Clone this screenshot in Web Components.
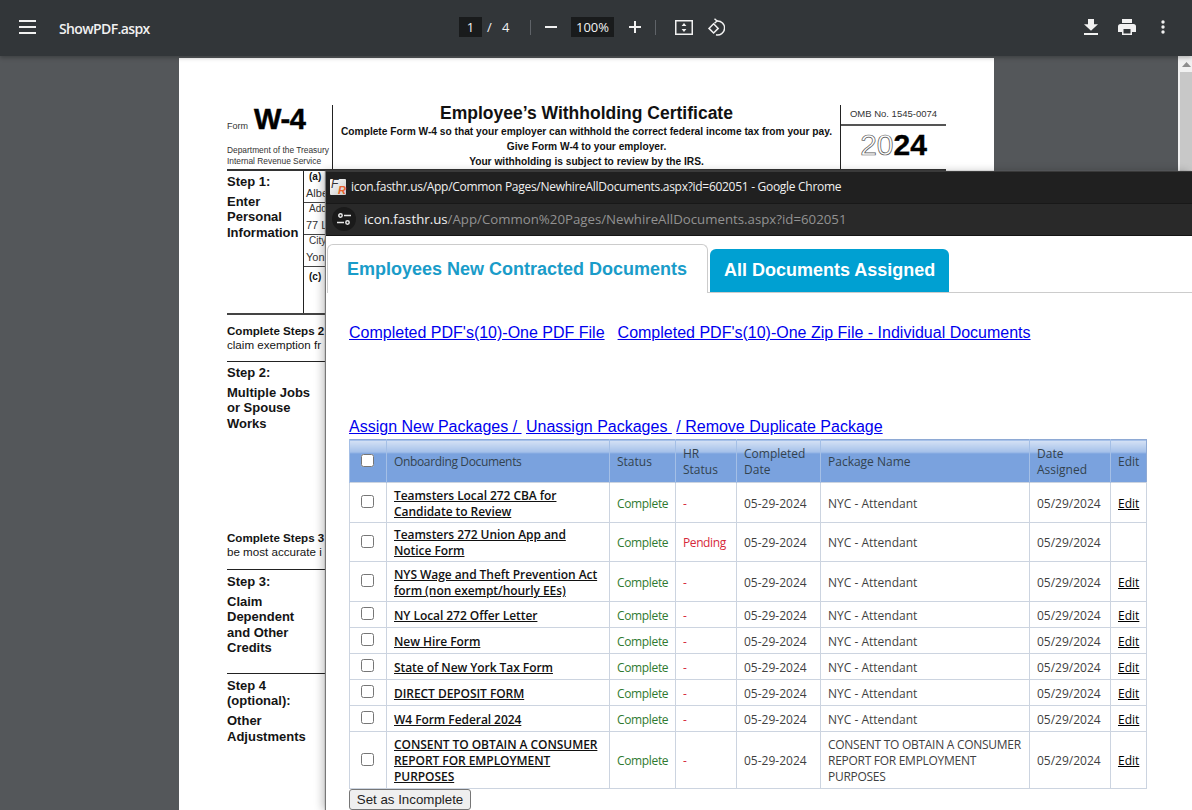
<!DOCTYPE html>
<html>
<head>
<meta charset="utf-8">
<title>ShowPDF.aspx</title>
<style>
  html, body { margin: 0; height: 100%; overflow: hidden; background: #54575a; }
  body { position: relative; width: 1192px; height: 810px; font-family: "Liberation Sans", Arial, sans-serif; }
</style>
</head>
<body>
<pdf-toolbar></pdf-toolbar>
<pdf-viewer>
  <w4-page></w4-page>
</pdf-viewer>
<chrome-popup>
  <doc-tabs></doc-tabs>
  <doc-links></doc-links>
  <doc-table></doc-table>
</chrome-popup>

<script>
// top bar of the pdf viewer
class PdfToolbar extends HTMLElement {
  constructor() {
    super();
    this.attachShadow({mode: "open"}).innerHTML = `
    <style>
      :host { display: flex; align-items: center; box-sizing: border-box; height: 56px; padding-bottom: 2px; background: #323639; color: #f1f1f1;
        font-family: "Open Sans", "Noto Sans", sans-serif; box-shadow: 0 2px 4px rgba(0,0,0,.25); position: relative; z-index: 1; }
      .left { width: 459px; display: flex; align-items: center; flex: none; }
      svg { display: block; flex: none; }
      .name { font-size: 14px; font-weight: 600; margin: 2px 0 0 23px; letter-spacing: -.62px; }
      .mid { display: flex; align-items: center; font-size: 13px; flex: none; }
      .box { background: #191b1c; height: 20px; line-height: 20px; text-align: center; }
      .sep { width: 1px; height: 15px; background: #5f6368; }
      .right { margin-left: auto; display: flex; align-items: center; }
    </style>
    <div class="left">
      <svg style="margin-left:19px" width="17" height="14" viewBox="0 0 17 14" fill="#f1f1f1"><rect y="0" width="17" height="2"/><rect y="6" width="17" height="2"/><rect y="12" width="17" height="2"/></svg>
      <span class="name">ShowPDF.aspx</span>
    </div>
    <div class="mid">
      <span class="box" style="width:23px">1</span>
      <span style="margin-left:5px;width:15px">/</span>
      <span style="width:28px">4</span>
      <span class="sep"></span>
      <svg style="margin-left:14px" width="12" height="2" fill="#f1f1f1"><rect width="12" height="2"/></svg>
      <span class="box" style="width:43px;margin-left:14px">100%</span>
      <svg style="margin-left:15px" width="12" height="12" fill="#f1f1f1"><rect y="5" width="12" height="2"/><rect x="5" width="2" height="12"/></svg>
      <span class="sep" style="margin-left:14px"></span>
      <svg style="margin-left:19px" width="18" height="15" viewBox="0 0 18 15" fill="#f1f1f1"><path d="M0 0h18v15H0zM1.500 1.500v12h15v-12z"/><path d="M9 3l2.400 3H6.600zM9 12l-2.400-3h4.800z"/></svg>
      <svg style="margin-left:14px" width="18" height="18" viewBox="0 0 18 18" fill="none" stroke="#f1f1f1" stroke-width="1.500"><path d="M7.500 .8L10 3 7.500 5.200"/><path d="M10 3a7 7 0 1 1-1 13.800"/><path d="M6.600 5.800l4.600 4.600-4.600 4.600L2 10.400z"/></svg>
    </div>
    <div class="right">
      <svg width="14" height="16" viewBox="0 0 14 16" fill="#f1f1f1"><path d="M4 0h6v6h4l-7 7-7-7h4z" transform="translate(0,-.5) scale(1,.95)"/><rect y="14" width="14" height="2"/></svg>
      <svg style="margin-left:20px" width="18" height="16" viewBox="0 0 18 16" fill="#f1f1f1"><path d="M4 0h10v4H4zM2.500 5h13A2.500 2.500 0 0 1 18 7.500V13h-4v3H4v-3H0V7.500A2.500 2.500 0 0 1 2.500 5zM5.500 10v4.500h7V10z"/></svg>
      <svg style="margin:0 27px 0 25px" width="4" height="14" viewBox="0 0 4 14" fill="#f1f1f1"><circle cx="2" cy="2" r="1.700"/><circle cx="2" cy="7" r="1.700"/><circle cx="2" cy="12" r="1.700"/></svg>
    </div>`;
  }
}

// gray area holding the page and the scrollbar
class PdfViewer extends HTMLElement {
  constructor() {
    super();
    this.attachShadow({mode: "open"}).innerHTML = `
    <style>
      :host { display: flex; height: 754px; background: #54575a; overflow: hidden; }
      .pages { width: 994px; padding: 2px 0 0 179px; box-sizing: border-box; flex: none; }
      .bar { margin-left: auto; width: 14px; background: #f1f1f1; padding-left: 2px; box-sizing: border-box; display: flex; flex-direction: column; }
      .up { height: 16px; display: flex; justify-content: center; padding-top: 6px; box-sizing: border-box; }
      .thumb { flex: 1; background: #c8c8c8; }
    </style>
    <div class="pages"><slot></slot></div>
    <div class="bar">
      <div class="up"><svg width="9" height="5" fill="#8e8e8e"><path d="M4.500 0L9 5H0z"/></svg></div>
      <div class="thumb"></div>
    </div>`;
  }
}

// one step block on the left of the form
class W4Step extends HTMLElement {
  constructor() {
    super();
    this.attachShadow({mode: "open"}).innerHTML = `
    <style>
      :host { display: block; box-sizing: border-box; padding-top: 2.500px; font-weight: bold; font-size: 13px; line-height: 15.400px; color: #141414; }
      .head { margin-bottom: 5px; }
    </style>
    <div class="head"><slot name="head"></slot></div>
    <slot></slot>`;
  }
}

class W4Page extends HTMLElement {
  constructor() {
    super();
    this.attachShadow({mode: "open"}).innerHTML = `
    <style>
      :host { display: block; width: 815px; height: 752px; background: #fff; box-sizing: border-box; padding: 47px 0 0 48px; color: #141414; overflow: hidden; }
      .head { display: grid; grid-template-columns: 105px 509px 105px; height: 64px; width: 719px; }
      .form { display: flex; flex-direction: column; justify-content: space-between; font-size: 8.400px; line-height: 11px; color: #333; padding-bottom: 2px; box-sizing: border-box; height: 64px; }
      .form .top { display: flex; align-items: flex-end; height: 29px; }
      .form b { font-size: 29px; line-height: 29px; color: #000; margin-left: 6px; letter-spacing: -.3px; -webkit-text-stroke: .5px #000; }
      .form span { font-size: 9px; line-height: 16px; }
      .title { border-left: 1px solid #222; border-right: 1px solid #222; text-align: center; font-weight: bold; font-size: 10.200px; line-height: 15px; color: #111; }
      .title h1 { margin: 0 0 2px; font-size: 17.500px; line-height: 17px; }
      .omb { font-size: 9.500px; }
      .omb div:first-child { height: 19px; line-height: 18px; text-align: center; border-bottom: 2px solid #555; color: #333; }
      .year { font-size: 30px; font-weight: bold; line-height: 38px; text-align: center; color: #000; -webkit-text-stroke: .4px #000; }
      .year i { font-style: normal; font-weight: normal; color: #fff; -webkit-text-stroke: .7px #555; }
      .rule { border-bottom: 2px solid #333; width: 719px; }
      .s1 { display: grid; grid-template-columns: 76px 1fr; height: 144px; border-bottom: 2px solid #444; width: 719px; box-sizing: border-box; }
      .info { border-left: 1px solid #222; font-size: 11px; color: #333; }
      .cell { height: 32px; border-bottom: 1px solid #444; padding-left: 2px; box-sizing: border-box; }
      .cell small { display: block; font-size: 10px; line-height: 12px; padding-left: 3px; }
      .cell small.b { font-weight: bold; color: #111; }
      .cell div { line-height: 16px; margin-top: 2px; }
      .note { font-size: 11.600px; line-height: 14px; box-sizing: border-box; }
      .note b { color: #141414; display: block; }
      .line { border-bottom: 1px solid #222; width: 719px; }
    </style>
    <div class="head">
      <div class="form">
        <div class="top"><span>Form</span><b>W-4</b></div>
        <div>Department of the Treasury<br>Internal Revenue Service</div>
      </div>
      <div class="title">
        <h1>Employee’s Withholding Certificate</h1>
        <div>Complete Form W-4 so that your employer can withhold the correct federal income tax from your pay.</div>
        <div>Give Form W-4 to your employer.</div>
        <div>Your withholding is subject to review by the IRS.</div>
      </div>
      <div class="omb">
        <div>OMB No. 1545-0074</div>
        <div class="year"><i>20</i>24</div>
      </div>
    </div>
    <div class="rule"></div>
    <div class="s1">
      <w4-step><span slot="head">Step 1:</span>Enter<br>Personal<br>Information</w4-step>
      <div class="info">
        <div class="cell"><small class="b">(a)</small><div>Albe</div></div>
        <div class="cell"><small>Add</small><div>77 L</div></div>
        <div class="cell"><small>City</small><div>Yon</div></div>
        <div class="cell" style="border:0;padding-top:4px"><small class="b">(c)</small></div>
      </div>
    </div>
    <div class="note line" style="height:47px;padding-top:9px"><b>Complete Steps 2</b>claim exemption fr</div>
    <w4-step style="height:169px"><span slot="head">Step 2:</span>Multiple Jobs<br>or Spouse<br>Works</w4-step>
    <div class="note line" style="height:39px"><b>Complete Steps 3</b>be most accurate i</div>
    <w4-step style="height:103px;padding-top:3.500px"><span slot="head">Step 3:</span>Claim<br>Dependent<br>and Other<br>Credits</w4-step>
    <div class="line"></div>
    <w4-step style="padding-top:3.500px"><span slot="head">Step 4<br>(optional):</span>Other<br>Adjustments</w4-step>`;
  }
}

// small chrome window lying over the pdf
class ChromePopup extends HTMLElement {
  constructor() {
    super();
    this.attachShadow({mode: "open"}).innerHTML = `
    <style>
      :host { display: block; position: absolute; left: 326px; top: 171px; width: 866px; height: 639px; background: #fff; z-index: 2;
        box-shadow: -1px 0 1px #777, -4px 0 8px rgba(0,0,0,.22); font-family: "Open Sans", "Noto Sans", sans-serif; }
      .title { height: 32px; padding-bottom: 2px; background: #202020; display: flex; align-items: center; color: #f0f0f0; font-size: 12px; letter-spacing: -.29px; box-sizing: border-box; border-top: 1px solid #3a3a3a; }
      .fav { width: 16px; height: 16px; margin-left: 4px; margin-right: 5px; background: linear-gradient(135deg,#fff,#c9c9c9); position: relative; flex: none; border-radius: 1px; font-family: "Liberation Sans", Arial, sans-serif; font-style: italic; letter-spacing: 0; }
      .fav i { position: absolute; left: 1px; top: 0; font-size: 12px; line-height: 11px; color: #333; }
      .fav u { position: absolute; left: 8px; top: 6px; font-size: 11px; line-height: 10px; color: #e8622c; text-decoration: none; font-weight: bold; }
      .addr { height: 33px; padding-bottom: 1px; background: #292929; border-top: 1px solid #181818; border-bottom: 1px solid #141414; box-sizing: border-box; display: flex; align-items: center; font-size: 13.250px; color: #929292; }
      .tune { width: 24px; height: 24px; border-radius: 50%; background: #1a1a1a; margin: 0 8px 0 6px; display: flex; align-items: center; justify-content: center; flex: none; }
      .addr b { font-weight: normal; color: #f0f0f0; }
    </style>
    <div class="title">
      <span class="fav"><i>F</i><u>R</u></span>
      <span>icon.fasthr.us/App/Common Pages/NewhireAllDocuments.aspx?id=602051 - Google Chrome</span>
    </div>
    <div class="addr">
      <span class="tune"><svg width="14" height="12" viewBox="0 0 14 12" fill="none" stroke="#e8e8e8" stroke-width="1.500"><circle cx="3.500" cy="2.500" r="1.700"/><path d="M7 2.500h7M0 9.500h7"/><circle cx="10.500" cy="9.500" r="1.700"/></svg></span>
      <span><b>icon.fasthr.us</b>/App/Common%20Pages/NewhireAllDocuments.aspx?id=602051</span>
    </div>
    <slot></slot>`;
  }
}

class DocTabs extends HTMLElement {
  constructor() {
    super();
    this.attachShadow({mode: "open"}).innerHTML = `
    <style>
      :host { display: flex; align-items: flex-end; height: 49px; margin: 8px 0 0 1px; box-sizing: border-box; border-bottom: 1px solid #ccc;
        font: bold 18px "Liberation Sans", Arial, sans-serif; }
      .t { box-sizing: border-box; display: flex; align-items: center; border-radius: 6px 6px 0 0; }
      .on { width: 381px; height: 49px; padding-left: 19px; padding-top: 1px; color: #1a9cc9; background: #fff; border: 1px solid #ccc; border-bottom: 0; margin-bottom: -1px; }
      .off { width: 239px; height: 43px; margin-left: 2px; padding-left: 14px; color: #fff; background: #00a0d2; }
    </style>
    <div class="t on">Employees New Contracted Documents</div>
    <div class="t off">All Documents Assigned</div>`;
  }
}

class DocLinks extends HTMLElement {
  constructor() {
    super();
    this.attachShadow({mode: "open"}).innerHTML = `
    <style>
      :host { display: block; padding: 31px 0 3px 23px; font: 16px/18px "Liberation Sans", Arial, sans-serif; }
      a { color: #0000ee; white-space: pre; }
      .one { display: flex; gap: 13px; margin-bottom: 76px; }
    </style>
    <div class="one"><a href="#">Completed PDF's(10)-One PDF File</a><a href="#">Completed PDF's(10)-One Zip File - Individual Documents</a></div>
    <div><a href="#">Assign New Packages / </a> <a href="#">Unassign Packages </a> <a href="#">/ Remove Duplicate Package</a></div>`;
  }
}

class DocTable extends HTMLElement {
  constructor() {
    super();
    this.attachShadow({mode: "open"});
    this.docs = [
      ["Teamsters Local 272 CBA for<br>Candidate to Review", "-", "NYC - Attendant", true, 39.700],
      ["Teamsters 272 Union App and<br>Notice Form", "Pending", "NYC - Attendant", false, 39.700],
      ["NYS Wage and Theft Prevention Act<br>form (non exempt/hourly EEs)", "-", "NYC - Attendant", true, 40],
      ["NY Local 272 Offer Letter", "-", "NYC - Attendant", true, 26],
      ["New Hire Form", "-", "NYC - Attendant", true, 26],
      ["State of New York Tax Form", "-", "NYC - Attendant", true, 26],
      ["DIRECT DEPOSIT FORM", "-", "NYC - Attendant", true, 26],
      ["W4 Form Federal 2024", "-", "NYC - Attendant", true, 26],
      ["CONSENT TO OBTAIN A CONSUMER<br>REPORT FOR EMPLOYMENT<br>PURPOSES", "-", '<span class="long">CONSENT TO OBTAIN A CONSUMER<br>REPORT FOR EMPLOYMENT<br>PURPOSES</span>', true, 56.600]
    ];
    this.render();
  }

  render() {
    const rows = this.docs.map(d => `
      <tr style="height:${d[4]}px">
        <td class="c"><input type="checkbox"></td>
        <td><a href="#">${d[0]}</a></td>
        <td class="ok">Complete</td>
        <td class="red">${d[1]}</td>
        <td>05-29-2024</td>
        <td>${d[2]}</td>
        <td>05/29/2024</td>
        <td>${d[3] ? '<a href="#" class="e">Edit</a>' : ""}</td>
      </tr>`).join("");
    this.shadowRoot.innerHTML = `
    <style>
      :host { display: block; margin-left: 23px; width: 798px; font: 12px/16px "Open Sans", "Noto Sans", sans-serif; color: #3f3f3f; }
      table { border-collapse: collapse; table-layout: fixed; width: 797px; border: 1px solid #8ea9d4; }
      th, td { border: 1px solid #ccd4e0; padding: 2.500px 0 0 7px; text-align: left; font-weight: normal; vertical-align: middle; }
      th { height: 43px; padding-top: 2px; border: 0; border-left: 1px solid #a4bfe6; color: #33424f; box-sizing: border-box;
        background: linear-gradient(#d5e2f5 0, #a3bfe9 12px, #7aa2de 13px, #7aa2de 100%); }
      input { margin: -2px 0 0; display: block; width: 13px; height: 13px; }
      .c { padding: 0 0 0 11px; }
      a { color: #000; }
      td a:not(.e) { font-weight: 600; color: #111; letter-spacing: -.06px; }
      .ok { color: #2f7a2f; letter-spacing: -.35px; }
      .red { color: #d6293a; letter-spacing: -.4px; }
      .long { letter-spacing: -.28px; }
      .ob { letter-spacing: -.35px; }
      button { display: block; width: 122px; height: 21px; padding: 0; font: 13.300px "Liberation Sans", Arial, sans-serif; color: #222; background: #efefef; border: 1px solid #767676; border-radius: 3px; }
    </style>
    <table>
      <colgroup><col style="width:37px"><col style="width:223px"><col style="width:66px"><col style="width:61px"><col style="width:84px"><col style="width:209px"><col style="width:81px"><col style="width:36px"></colgroup>
      <tr>
        <th class="c"><input type="checkbox"></th>
        <th class="ob">Onboarding Documents</th>
        <th>Status</th>
        <th>HR Status</th>
        <th>Completed Date</th>
        <th>Package Name</th>
        <th>Date Assigned</th>
        <th>Edit</th>
      </tr>
      ${rows}
    </table>
    <button>Set as Incomplete</button>`;
  }
}

customElements.define("pdf-toolbar", PdfToolbar);
customElements.define("pdf-viewer", PdfViewer);
customElements.define("w4-step", W4Step);
customElements.define("w4-page", W4Page);
customElements.define("chrome-popup", ChromePopup);
customElements.define("doc-tabs", DocTabs);
customElements.define("doc-links", DocLinks);
customElements.define("doc-table", DocTable);
</script>
</body>
</html>
